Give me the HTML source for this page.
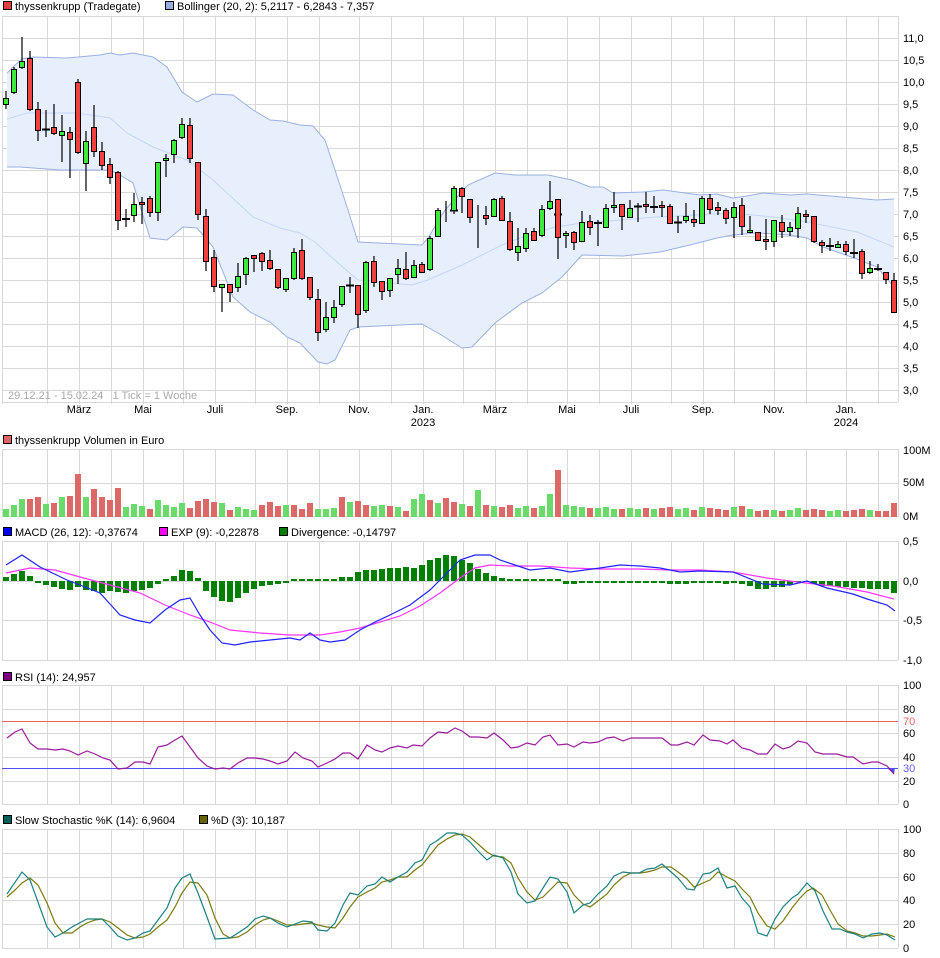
<!DOCTYPE html>
<html><head><meta charset="utf-8"><style>
html,body{margin:0;padding:0;background:#fff;}
svg{display:block;font-family:"Liberation Sans",sans-serif;font-size:11px;}
</style></head><body>
<svg width="940" height="958" viewBox="0 0 940 958" xmlns="http://www.w3.org/2000/svg">
<defs>
<g id="vg" stroke="#d8d8d8" stroke-width="1">
<path d="M2.5 0V1M47.5 0V1M79.5 0V1M111.5 0V1M143.5 0V1M183.5 0V1M215.5 0V1M255.5 0V1M287.5 0V1M319.5 0V1M359.5 0V1M391.5 0V1M423.5 0V1M463.5 0V1M495.5 0V1M527.5 0V1M567.5 0V1M599.5 0V1M631.5 0V1M671.5 0V1M703.5 0V1M734.5 0V1M774.5 0V1M806.5 0V1M846.5 0V1M878.5 0V1"/>
</g>
</defs>
<!-- grids -->
<g stroke="#d8d8d8" stroke-width="1" fill="none">
<g transform="translate(0,16) scale(1,388)"><use href="#vg"/></g>
<path d="M2 16.5H898M2 38.5H898M2 60.5H898M2 82.5H898M2 104.5H898M2 126.5H898M2 148.5H898M2 170.5H898M2 192.5H898M2 214.5H898M2 236.5H898M2 258.5H898M2 280.5H898M2 302.5H898M2 324.5H898M2 346.5H898M2 368.5H898M2 390.5H898M2 402.5H898"/>
<path d="M898.5 16V402"/>
<g transform="translate(0,449) scale(1,68)"><use href="#vg"/></g>
<path d="M2 449.5H898M2 483.5H898M2 516.5H898M898.5 449V517"/>
<g transform="translate(0,541) scale(1,119)"><use href="#vg"/></g>
<path d="M2 541.5H898M2 581.5H898M2 620.5H898M2 660.5H898M898.5 541V660"/>
<g transform="translate(0,685) scale(1,119)"><use href="#vg"/></g>
<path d="M2 685.5H898M2 709.5H898M2 733.5H898M2 757.5H898M2 781.5H898M2 804.5H898M898.5 685V804"/>
<g transform="translate(0,829) scale(1,119)"><use href="#vg"/></g>
<path d="M2 829.5H898M2 853.5H898M2 877.5H898M2 900.5H898M2 924.5H898M2 948.5H898M898.5 829V948"/>
</g>

<!-- Legends -->
<g fill="#000">
<rect x="3.5" y="1.5" width="8" height="8" fill="#e04040" stroke="#000"/>
<text x="15" y="10">thyssenkrupp (Tradegate)</text>
<rect x="165.5" y="1.5" width="8" height="8" fill="#99aee0" stroke="#000"/>
<text x="177" y="10">Bollinger (20, 2): 5,2117 - 6,2843 - 7,357</text>
<rect x="3.5" y="435.5" width="8" height="8" fill="#dd6666" stroke="#000"/>
<text x="15" y="444">thyssenkrupp Volumen in Euro</text>
<rect x="3.5" y="527.5" width="8" height="8" fill="#0000ff" stroke="#000"/>
<text x="15" y="536">MACD (26, 12): -0,37674</text>
<rect x="159.5" y="527.5" width="8" height="8" fill="#ff00ff" stroke="#000"/>
<text x="171" y="536">EXP (9): -0,22878</text>
<rect x="279.5" y="527.5" width="8" height="8" fill="#008000" stroke="#000"/>
<text x="291" y="536">Divergence: -0,14797</text>
<rect x="3.5" y="672.5" width="8" height="8" fill="#800080" stroke="#000"/>
<text x="15" y="681">RSI (14): 24,957</text>
<rect x="3.5" y="815.5" width="8" height="8" fill="#006060" stroke="#000"/>
<text x="15" y="824">Slow Stochastic %K (14): 6,9604</text>
<rect x="199.5" y="815.5" width="8" height="8" fill="#666600" stroke="#000"/>
<text x="211" y="824">%D (3): 10,187</text>
</g>

<!-- Bollinger -->
<polygon fill="#e8effc" stroke="none" points="7,73 14,66 22,59 33,57 67,58 100,55 110,53 120,55 133,53 153,57 167,67 182,92 197,102 213,94 233,95 253,110 270,120 283,121 300,125 313,126 325,140 335,170 348,210 358,242 422,245 428,238 445,210 468,185 495,173 515,175 548,175 572,180 590,187 603,187 613,193 643,192 663,190 700,195 717,194 733,198 747,196 763,193 790,195 807,194 877,200 894,199 894,287 877,267 857,259 823,247 807,238 790,235 757,233 733,235 717,238 690,245 660,252 623,256 582,255 562,277 542,293 522,303 495,323 472,347 462,348 438,333 422,324 358,327 350,330 335,360 327,364 318,362 300,343 287,337 270,322 250,312 233,297 213,247 197,228 183,227 167,240 150,238 133,183 120,175 110,170 60,170 20,167 7,167"/>
<g fill="none" stroke-width="1">
<polyline stroke="#9ab0e2" points="7,73 14,66 22,59 33,57 67,58 100,55 110,53 120,55 133,53 153,57 167,67 182,92 197,102 213,94 233,95 253,110 270,120 283,121 300,125 313,126 325,140 335,170 348,210 358,242 422,245 428,238 445,210 468,185 495,173 515,175 548,175 572,180 590,187 603,187 613,193 643,192 663,190 700,195 717,194 733,198 747,196 763,193 790,195 807,194 877,200 894,199"/>
<polyline stroke="#9ab0e2" points="7,167 20,167 60,170 110,170 120,175 133,183 150,238 167,240 183,227 197,228 213,247 233,297 250,312 270,322 287,337 300,343 318,362 327,364 335,360 350,330 358,327 422,324 438,333 462,348 472,347 495,323 522,303 542,293 562,277 582,255 623,256 660,252 690,245 717,238 733,235 757,233 790,235 807,238 823,247 857,259 877,267 894,287"/>
<polyline stroke="#c4d6f6" points="7,119 27,113 77,113 110,118 127,133 153,147 187,160 213,180 253,217 280,228 300,233 315,242 338,263 358,280 412,285 428,280 462,265 482,255 502,245 528,235 555,227 582,223 595,222 657,217 733,213 773,217 807,222 857,232 894,247"/>
</g>

<!-- Candles -->
<g stroke="#000" stroke-width="1.2" fill="none">
<path d="M6 91V109M14 67V94M22 37V69M30 51V111M38 102V141M46 110V137M54 104V135M62 115V162M70 127V178M78 79V154M86 131V191M94 105V157M102 142V170M110 158V184M118 171V230M126 209V227M134 193V222M142 197V224M150 196V217M158 162V221M166 154V177M174 139V163M182 118V139M190 118V163M198 162V220M206 209V271M214 250V292M222 284V312M230 284V302M238 263V292M246 257V285M254 255V272M262 252V271M270 250V270M278 269V289M286 278V292M294 248V280M302 239V280M310 277V300M318 289V341M326 302V332M334 300V323M342 286V307M350 277V293M358 285V328M366 261V313M374 256V287M382 281V300M390 278V297M398 259V284M406 252V280M414 260V277M422 262V272M430 236V271M438 208V236M446 201V222M454 186V214M462 187V213M470 199V223M478 205V248M486 206V225M494 198V217M502 196V221M510 212V251M518 228V261M526 228V252M534 228V240M542 205V237M550 181V210M558 199V259M566 231V248M574 231V250M582 211V241M590 215V235M598 220V246M606 204V227M614 192V213M622 204V230M630 200V217M638 203V222M646 192V213M654 196V213M662 201V217M670 204V224M678 216V233M686 203V223M694 210V227M702 196V223M710 194V214M718 202V215M726 208V224M734 202V238M742 198V235M750 216V233M758 232V241M766 219V250M774 220V247M782 215V238M790 222V236M798 207V238M806 210V223M814 216V243M822 240V253M830 238V251M838 241V247M846 241V255M854 239V258M862 249V279M870 261V274M878 264V271M886 272V284M894 273V313"/>
<path stroke-width="2" d="M42 129.5H50M122 219H130M346 285.5H354M450 210.5H458M554 214.5H562M594 223H602M634 206.5H642M650 207H658M674 222.5H682M826 246H834M850 253H858M874 269H882"/>
</g>
<g stroke="#000" stroke-width="1">
<g fill="#3ee83e">
<rect x="3.5" y="98.5" width="5" height="6"/><rect x="11.5" y="69.5" width="5" height="23"/><rect x="19.5" y="61.5" width="5" height="6"/><rect x="59.5" y="131.5" width="5" height="4"/><rect x="83.5" y="141.5" width="5" height="22"/><rect x="131.5" y="204.5" width="5" height="11"/><rect x="155.5" y="162.5" width="5" height="50"/><rect x="163.5" y="158.5" width="5" height="2"/><rect x="171.5" y="140.5" width="5" height="14"/><rect x="179.5" y="124.5" width="5" height="13"/><rect x="219.5" y="284.5" width="5" height="3"/><rect x="235.5" y="276.5" width="5" height="11"/><rect x="243.5" y="258.5" width="5" height="16"/><rect x="283.5" y="278.5" width="5" height="11"/><rect x="291.5" y="252.5" width="5" height="26"/><rect x="323.5" y="317.5" width="5" height="12"/><rect x="331.5" y="307.5" width="5" height="10"/><rect x="339.5" y="286.5" width="5" height="18"/><rect x="363.5" y="262.5" width="5" height="48"/><rect x="387.5" y="278.5" width="5" height="12"/><rect x="395.5" y="268.5" width="5" height="6"/><rect x="411.5" y="265.5" width="5" height="12"/><rect x="427.5" y="238.5" width="5" height="31"/><rect x="435.5" y="210.5" width="5" height="26"/><rect x="451.5" y="188.5" width="5" height="22"/><rect x="491.5" y="199.5" width="5" height="17"/><rect x="515.5" y="246.5" width="5" height="6"/><rect x="523.5" y="233.5" width="5" height="15"/><rect x="539.5" y="209.5" width="5" height="26"/><rect x="547.5" y="201.5" width="5" height="7"/><rect x="563.5" y="233.5" width="5" height="2"/><rect x="579.5" y="222.5" width="5" height="19"/><rect x="603.5" y="208.5" width="5" height="19"/><rect x="611.5" y="205.5" width="5" height="2"/><rect x="627.5" y="208.5" width="5" height="9"/><rect x="683.5" y="216.5" width="5" height="4"/><rect x="699.5" y="198.5" width="5" height="25"/><rect x="731.5" y="207.5" width="5" height="10"/><rect x="747.5" y="230.5" width="5" height="2"/><rect x="771.5" y="220.5" width="5" height="21"/><rect x="787.5" y="227.5" width="5" height="4"/><rect x="795.5" y="213.5" width="5" height="15"/><rect x="835.5" y="244.5" width="5" height="3"/><rect x="867.5" y="268.5" width="5" height="4"/>
</g>
<g fill="#f04040">
<rect x="27.5" y="58.5" width="5" height="51"/><rect x="35.5" y="109.5" width="5" height="21"/><rect x="51.5" y="127.5" width="5" height="6"/><rect x="67.5" y="132.5" width="5" height="7"/><rect x="75.5" y="82.5" width="5" height="70"/><rect x="91.5" y="127.5" width="5" height="24"/><rect x="99.5" y="151.5" width="5" height="14"/><rect x="107.5" y="164.5" width="5" height="13"/><rect x="115.5" y="172.5" width="5" height="48"/><rect x="139.5" y="202.5" width="5" height="2"/><rect x="147.5" y="198.5" width="5" height="14"/><rect x="187.5" y="125.5" width="5" height="33"/><rect x="195.5" y="162.5" width="5" height="52"/><rect x="203.5" y="216.5" width="5" height="45"/><rect x="211.5" y="257.5" width="5" height="29"/><rect x="227.5" y="284.5" width="5" height="8"/><rect x="251.5" y="255.5" width="5" height="3"/><rect x="259.5" y="253.5" width="5" height="8"/><rect x="267.5" y="260.5" width="5" height="8"/><rect x="275.5" y="269.5" width="5" height="18"/><rect x="299.5" y="250.5" width="5" height="28"/><rect x="307.5" y="277.5" width="5" height="20"/><rect x="315.5" y="299.5" width="5" height="33"/><rect x="355.5" y="285.5" width="5" height="29"/><rect x="371.5" y="261.5" width="5" height="21"/><rect x="379.5" y="281.5" width="5" height="10"/><rect x="403.5" y="269.5" width="5" height="9"/><rect x="419.5" y="264.5" width="5" height="8"/><rect x="459.5" y="188.5" width="5" height="8"/><rect x="467.5" y="199.5" width="5" height="18"/><rect x="483.5" y="215.5" width="5" height="3"/><rect x="499.5" y="198.5" width="5" height="22"/><rect x="507.5" y="221.5" width="5" height="28"/><rect x="531.5" y="231.5" width="5" height="9"/><rect x="555.5" y="199.5" width="5" height="38"/><rect x="571.5" y="232.5" width="5" height="10"/><rect x="587.5" y="221.5" width="5" height="6"/><rect x="619.5" y="204.5" width="5" height="12"/><rect x="643.5" y="204.5" width="5" height="2"/><rect x="659.5" y="205.5" width="5" height="2"/><rect x="667.5" y="206.5" width="5" height="17"/><rect x="691.5" y="219.5" width="5" height="3"/><rect x="707.5" y="198.5" width="5" height="11"/><rect x="715.5" y="207.5" width="5" height="3"/><rect x="723.5" y="210.5" width="5" height="8"/><rect x="739.5" y="205.5" width="5" height="21"/><rect x="755.5" y="232.5" width="5" height="8"/><rect x="763.5" y="239.5" width="5" height="2"/><rect x="779.5" y="222.5" width="5" height="9"/><rect x="803.5" y="214.5" width="5" height="2"/><rect x="811.5" y="216.5" width="5" height="25"/><rect x="819.5" y="242.5" width="5" height="3"/><rect x="843.5" y="244.5" width="5" height="7"/><rect x="859.5" y="251.5" width="5" height="22"/><rect x="883.5" y="272.5" width="5" height="7"/><rect x="891.5" y="280.5" width="5" height="32"/>
</g>
</g>

<text x="8" y="399" fill="#aaa">29.12.21 - 15.02.24 &#160; 1 Tick = 1 Woche</text>

<!-- Price axis -->
<g fill="#000">
<text x="903" y="42">11,0</text><text x="903" y="64">10,5</text><text x="903" y="86">10,0</text><text x="903" y="108">9,5</text><text x="903" y="130">9,0</text><text x="903" y="152">8,5</text><text x="903" y="174">8,0</text><text x="903" y="196">7,5</text><text x="903" y="218">7,0</text><text x="903" y="240">6,5</text><text x="903" y="262">6,0</text><text x="903" y="284">5,5</text><text x="903" y="306">5,0</text><text x="903" y="328">4,5</text><text x="903" y="350">4,0</text><text x="903" y="372">3,5</text><text x="903" y="394">3,0</text>
<text x="903" y="454">100M</text><text x="903" y="486">50M</text><text x="903" y="520">0M</text>
<text x="903" y="545">0,5</text><text x="903" y="585">0,0</text><text x="903" y="624">-0,5</text><text x="903" y="664">-1,0</text>
<text x="903" y="689">100</text><text x="903" y="713">80</text><text x="903" y="737">60</text><text x="903" y="761">40</text><text x="903" y="785">20</text><text x="903" y="808">0</text>
<text x="903" y="725" fill="#f06060">70</text><text x="903" y="772" fill="#6060ff">30</text>
<text x="903" y="833">100</text><text x="903" y="857">80</text><text x="903" y="881">60</text><text x="903" y="904">40</text><text x="903" y="928">20</text><text x="903" y="952">0</text>
</g>
<g fill="#000" text-anchor="middle">
<text x="79" y="413">März</text><text x="143" y="413">Mai</text><text x="215" y="413">Juli</text><text x="287" y="413">Sep.</text><text x="359" y="413">Nov.</text><text x="423" y="413">Jan.</text><text x="423" y="426">2023</text><text x="495" y="413">März</text><text x="567" y="413">Mai</text><text x="631" y="413">Juli</text><text x="703" y="413">Sep.</text><text x="774" y="413">Nov.</text><text x="846" y="413">Jan.</text><text x="846" y="426">2024</text>
</g>

<!-- Volume -->
<g>
<g fill="#6ada6a">
<rect x="3" y="509" width="6" height="8"/><rect x="11" y="505" width="6" height="12"/><rect x="19" y="499" width="6" height="18"/><rect x="43" y="504" width="6" height="13"/><rect x="59" y="497" width="6" height="20"/><rect x="83" y="497" width="6" height="20"/><rect x="123" y="507" width="6" height="10"/><rect x="131" y="504" width="6" height="13"/><rect x="139" y="506" width="6" height="11"/><rect x="155" y="500" width="6" height="17"/><rect x="163" y="505" width="6" height="12"/><rect x="171" y="507" width="6" height="10"/><rect x="179" y="503" width="6" height="14"/><rect x="219" y="503" width="6" height="14"/><rect x="235" y="507" width="6" height="10"/><rect x="243" y="509" width="6" height="8"/><rect x="251" y="510" width="6" height="7"/><rect x="283" y="505" width="6" height="12"/><rect x="315" y="509" width="6" height="8"/><rect x="323" y="509" width="6" height="8"/><rect x="331" y="508" width="6" height="9"/><rect x="347" y="502" width="6" height="15"/><rect x="371" y="506" width="6" height="11"/><rect x="379" y="505" width="6" height="12"/><rect x="395" y="507" width="6" height="10"/><rect x="411" y="499" width="6" height="18"/><rect x="419" y="494" width="6" height="23"/><rect x="435" y="503" width="6" height="14"/><rect x="459" y="504" width="6" height="13"/><rect x="475" y="490" width="6" height="27"/><rect x="491" y="506" width="6" height="11"/><rect x="515" y="508" width="6" height="9"/><rect x="523" y="506" width="6" height="11"/><rect x="539" y="506" width="6" height="11"/><rect x="547" y="494" width="6" height="23"/><rect x="563" y="505" width="6" height="12"/><rect x="571" y="506" width="6" height="11"/><rect x="579" y="507" width="6" height="10"/><rect x="595" y="508" width="6" height="9"/><rect x="603" y="507" width="6" height="10"/><rect x="611" y="509" width="6" height="8"/><rect x="627" y="508" width="6" height="9"/><rect x="635" y="509" width="6" height="8"/><rect x="651" y="509" width="6" height="8"/><rect x="675" y="509" width="6" height="8"/><rect x="683" y="508" width="6" height="9"/><rect x="699" y="507" width="6" height="10"/><rect x="731" y="507" width="6" height="10"/><rect x="747" y="509" width="6" height="8"/><rect x="771" y="510" width="6" height="7"/><rect x="787" y="510" width="6" height="7"/><rect x="795" y="508" width="6" height="9"/><rect x="827" y="511" width="6" height="6"/><rect x="835" y="510" width="6" height="7"/><rect x="867" y="510" width="6" height="7"/>
</g>
<g fill="#dd6868">
<rect x="27" y="499" width="6" height="18"/><rect x="35" y="497" width="6" height="20"/><rect x="51" y="503" width="6" height="14"/><rect x="67" y="496" width="6" height="21"/><rect x="75" y="474" width="6" height="43"/><rect x="91" y="489" width="6" height="28"/><rect x="99" y="497" width="6" height="20"/><rect x="107" y="500" width="6" height="17"/><rect x="115" y="488" width="6" height="29"/><rect x="147" y="509" width="6" height="8"/><rect x="187" y="508" width="6" height="9"/><rect x="195" y="501" width="6" height="16"/><rect x="203" y="499" width="6" height="18"/><rect x="211" y="502" width="6" height="15"/><rect x="227" y="510" width="6" height="7"/><rect x="259" y="505" width="6" height="12"/><rect x="267" y="502" width="6" height="15"/><rect x="275" y="506" width="6" height="11"/><rect x="291" y="505" width="6" height="12"/><rect x="299" y="509" width="6" height="8"/><rect x="307" y="503" width="6" height="14"/><rect x="339" y="497" width="6" height="20"/><rect x="355" y="501" width="6" height="16"/><rect x="363" y="505" width="6" height="12"/><rect x="387" y="506" width="6" height="11"/><rect x="403" y="511" width="6" height="6"/><rect x="427" y="500" width="6" height="17"/><rect x="443" y="498" width="6" height="19"/><rect x="451" y="502" width="6" height="15"/><rect x="467" y="506" width="6" height="11"/><rect x="483" y="505" width="6" height="12"/><rect x="499" y="507" width="6" height="10"/><rect x="507" y="505" width="6" height="12"/><rect x="531" y="508" width="6" height="9"/><rect x="555" y="470" width="6" height="47"/><rect x="587" y="508" width="6" height="9"/><rect x="619" y="509" width="6" height="8"/><rect x="643" y="508" width="6" height="9"/><rect x="659" y="508" width="6" height="9"/><rect x="667" y="507" width="6" height="10"/><rect x="691" y="510" width="6" height="7"/><rect x="707" y="508" width="6" height="9"/><rect x="715" y="509" width="6" height="8"/><rect x="723" y="510" width="6" height="7"/><rect x="739" y="506" width="6" height="11"/><rect x="755" y="511" width="6" height="6"/><rect x="763" y="510" width="6" height="7"/><rect x="779" y="511" width="6" height="6"/><rect x="803" y="510" width="6" height="7"/><rect x="811" y="509" width="6" height="8"/><rect x="819" y="510" width="6" height="7"/><rect x="843" y="511" width="6" height="6"/><rect x="851" y="510" width="6" height="7"/><rect x="859" y="509" width="6" height="8"/><rect x="875" y="511" width="6" height="6"/><rect x="883" y="511" width="6" height="6"/><rect x="891" y="503" width="6" height="14"/>
</g>
</g>

<!-- MACD histogram -->
<g fill="#008000">
<rect x="3" y="577" width="6" height="4"/><rect x="11" y="574" width="6" height="7"/><rect x="19" y="571" width="6" height="10"/><rect x="27" y="576" width="6" height="5"/>
<rect x="35" y="581" width="6" height="2"/><rect x="43" y="581" width="6" height="4"/><rect x="51" y="581" width="6" height="6"/><rect x="59" y="581" width="6" height="8"/><rect x="67" y="581" width="6" height="9"/><rect x="75" y="581" width="6" height="6"/><rect x="83" y="581" width="6" height="9"/><rect x="91" y="581" width="6" height="10"/><rect x="99" y="581" width="6" height="12"/><rect x="107" y="581" width="6" height="10"/><rect x="115" y="581" width="6" height="11"/><rect x="123" y="581" width="6" height="12"/><rect x="131" y="581" width="6" height="10"/><rect x="139" y="581" width="6" height="9"/><rect x="147" y="581" width="6" height="7"/><rect x="155" y="581" width="6" height="3"/>
<rect x="163" y="579" width="6" height="2"/><rect x="171" y="576" width="6" height="5"/><rect x="179" y="570" width="6" height="11"/><rect x="187" y="571" width="6" height="10"/><rect x="195" y="578" width="6" height="3"/>
<rect x="203" y="581" width="6" height="10"/><rect x="211" y="581" width="6" height="16"/><rect x="219" y="581" width="6" height="20"/><rect x="227" y="581" width="6" height="21"/><rect x="235" y="581" width="6" height="17"/><rect x="243" y="581" width="6" height="12"/><rect x="251" y="581" width="6" height="8"/><rect x="259" y="581" width="6" height="5"/><rect x="267" y="581" width="6" height="4"/><rect x="275" y="581" width="6" height="3"/><rect x="283" y="581" width="6" height="2"/>
<rect x="291" y="579" width="6" height="2"/><rect x="299" y="579" width="6" height="2"/><rect x="307" y="579" width="6" height="2"/><rect x="315" y="579" width="6" height="2"/><rect x="323" y="579" width="6" height="2"/><rect x="331" y="579" width="6" height="2"/><rect x="339" y="577" width="6" height="4"/><rect x="347" y="577" width="6" height="4"/><rect x="355" y="572" width="6" height="9"/><rect x="363" y="570" width="6" height="11"/><rect x="371" y="570" width="6" height="11"/><rect x="379" y="569" width="6" height="12"/><rect x="387" y="568" width="6" height="13"/><rect x="395" y="568" width="6" height="13"/><rect x="403" y="567" width="6" height="14"/><rect x="411" y="568" width="6" height="13"/><rect x="419" y="565" width="6" height="16"/><rect x="427" y="560" width="6" height="21"/><rect x="435" y="558" width="6" height="23"/><rect x="443" y="555" width="6" height="26"/><rect x="451" y="556" width="6" height="25"/><rect x="459" y="560" width="6" height="21"/><rect x="467" y="563" width="6" height="18"/><rect x="475" y="569" width="6" height="12"/><rect x="483" y="573" width="6" height="8"/><rect x="491" y="576" width="6" height="5"/><rect x="499" y="578" width="6" height="3"/><rect x="507" y="579" width="6" height="2"/>
<rect x="515" y="579" width="6" height="2"/><rect x="523" y="579" width="6" height="2"/><rect x="531" y="579" width="6" height="2"/><rect x="539" y="579" width="6" height="2"/><rect x="547" y="579" width="6" height="2"/><rect x="555" y="579" width="6" height="2"/>
<rect x="563" y="581" width="6" height="3"/><rect x="571" y="581" width="6" height="3"/><rect x="579" y="581" width="6" height="2"/><rect x="587" y="581" width="6" height="2"/><rect x="595" y="581" width="6" height="2"/><rect x="603" y="581" width="6" height="2"/><rect x="611" y="581" width="6" height="2"/><rect x="619" y="581" width="6" height="2"/><rect x="627" y="581" width="6" height="2"/><rect x="635" y="581" width="6" height="2"/><rect x="643" y="581" width="6" height="2"/><rect x="651" y="581" width="6" height="2"/><rect x="659" y="581" width="6" height="2"/><rect x="667" y="581" width="6" height="3"/><rect x="675" y="581" width="6" height="3"/><rect x="683" y="581" width="6" height="3"/><rect x="691" y="581" width="6" height="2"/><rect x="699" y="581" width="6" height="2"/><rect x="707" y="581" width="6" height="2"/><rect x="715" y="581" width="6" height="2"/><rect x="723" y="581" width="6" height="3"/><rect x="731" y="581" width="6" height="2"/><rect x="739" y="581" width="6" height="3"/><rect x="747" y="581" width="6" height="5"/><rect x="755" y="581" width="6" height="8"/><rect x="763" y="581" width="6" height="8"/><rect x="771" y="581" width="6" height="6"/><rect x="779" y="581" width="6" height="6"/><rect x="787" y="581" width="6" height="4"/><rect x="795" y="581" width="6" height="1"/><rect x="803" y="581" width="6" height="1"/><rect x="811" y="581" width="6" height="3"/><rect x="819" y="581" width="6" height="5"/><rect x="827" y="581" width="6" height="5"/><rect x="835" y="581" width="6" height="6"/><rect x="843" y="581" width="6" height="6"/><rect x="851" y="581" width="6" height="7"/><rect x="859" y="581" width="6" height="7"/><rect x="867" y="581" width="6" height="8"/><rect x="875" y="581" width="6" height="8"/><rect x="883" y="581" width="6" height="8"/><rect x="891" y="581" width="6" height="12"/>
</g>
<g fill="none" stroke-width="1.2">
<polyline stroke="#ff33ff" points="6,573 30,568 55,570 80,577 110,585 140,593 165,605 190,615 210,622 230,630 260,633 290,635 320,635 340,632 360,628 380,622 400,616 420,606 440,593 460,578 475,568 490,565 510,566 540,566 570,568 600,569 640,569 670,570 700,570 733,572 767,578 797,582 833,586 867,592 894,599"/>
<polyline stroke="#2222ff" points="6,565 22,555 40,567 67,580 80,585 100,593 120,615 135,620 150,623 165,610 180,600 190,598 200,615 210,630 222,643 235,645 250,642 270,640 290,638 300,640 310,633 320,640 330,642 345,640 360,630 375,622 390,615 410,605 430,590 445,575 460,560 475,555 490,555 500,560 515,565 530,570 550,568 570,572 600,568 620,565 640,566 660,568 680,572 700,571 733,572 763,584 790,585 807,581 827,588 853,594 867,599 887,605 895,611"/>
</g>

<!-- RSI -->
<path d="M2 721.5H898" stroke="#f06060" stroke-width="1"/>
<path d="M2 768.5H898" stroke="#5050ff" stroke-width="1"/>
<polygon points="887,768 894,774 895,768" fill="#5050ff"/>
<polyline fill="none" stroke="#9a1a9a" stroke-width="1.2" points="7,738 15,732 22,729 30,743 38,749 47,749 55,750 63,749 70,751 78,755 87,751 95,754 103,758 110,760 118,769 127,768 135,762 143,762 150,764 158,747 167,745 175,740 182,736 190,747 198,758 207,766 215,769 223,768 230,769 238,763 247,758 255,758 263,759 270,761 278,764 287,761 295,752 303,758 312,761 318,767 327,763 335,759 343,753 350,753 358,759 367,745 375,750 382,752 390,748 398,746 407,748 413,745 422,746 430,738 438,732 447,733 455,728 462,731 470,737 478,737 487,738 494,733 503,740 511,748 518,747 527,743 535,745 543,737 550,735 558,745 567,744 574,747 583,742 590,743 598,742 607,738 614,737 623,741 631,738 647,738 662,738 671,745 678,745 687,742 694,745 703,735 710,740 720,741 727,744 733,740 742,748 750,750 758,754 767,754 775,744 783,749 790,747 798,741 807,743 815,752 823,754 837,754 847,757 853,757 863,764 872,762 878,762 887,766 894,774"/>

<!-- Stochastic -->
<g fill="none" stroke-width="1.2">
<polyline stroke="#7a7a10" points="7,897 15,890 22,883 30,878 38,885 47,903 55,923 63,933 72,933 80,927 87,923 95,920 102,919 110,922 118,928 127,935 135,938 143,937 150,934 158,927 167,920 175,907 182,893 190,882 198,883 207,895 215,918 223,934 230,938 238,937 247,932 255,925 263,920 270,918 278,921 287,925 295,925 303,924 312,923 318,925 327,927 335,928 343,918 350,907 358,897 367,892 375,888 382,882 390,880 398,877 407,877 415,870 422,865 430,855 438,845 447,839 455,835 462,834 470,837 478,844 487,852 494,856 503,857 511,863 518,878 527,892 535,900 543,897 550,890 558,882 567,883 574,895 583,904 590,907 598,901 607,894 614,885 623,877 631,873 640,873 647,872 655,870 662,867 671,867 678,872 687,879 694,887 703,883 710,880 718,872 727,877 735,881 743,890 750,897 758,913 767,926 775,929 783,921 792,908 800,898 807,891 813,888 822,895 830,910 838,924 847,931 855,933 863,936 872,936 880,935 887,934 895,937"/>
<polyline stroke="#1a8080" points="7,894 22,872 30,880 47,927 55,937 63,933 72,927 87,919 102,919 110,927 118,936 127,940 135,938 143,933 150,931 158,920 167,908 175,888 182,878 190,874 198,893 207,917 215,939 230,938 238,933 247,927 255,919 263,916 270,918 278,923 287,927 295,924 303,921 312,922 318,930 327,931 335,923 343,905 350,893 358,895 367,886 375,884 382,877 390,882 398,877 407,872 415,863 422,860 430,845 438,840 447,833 455,833 462,835 470,842 478,851 487,860 494,855 503,858 511,872 518,894 527,903 535,901 543,888 550,877 558,879 567,892 574,913 583,905 590,903 598,894 607,886 614,876 623,872 631,873 639,873 647,869 655,868 662,864 671,872 678,878 687,889 694,890 703,874 710,873 718,868 727,888 735,886 742,898 750,907 758,933 767,936 775,919 783,907 792,898 798,894 807,883 815,891 823,911 832,929 840,929 847,932 855,934 863,938 872,934 880,933 887,935 895,940"/>
</g>
</svg>
</body></html>
